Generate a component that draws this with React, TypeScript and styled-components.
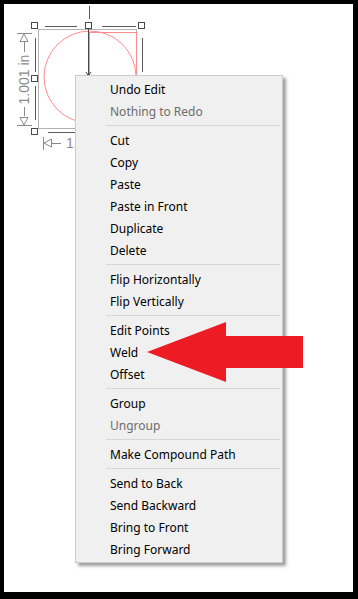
import React from 'react';
import styled, { createGlobalStyle } from 'styled-components';

type Item = { label: string; disabled?: boolean } | 'sep';

const items: Item[] = [
  { label: 'Undo Edit' },
  { label: 'Nothing to Redo', disabled: true },
  'sep',
  { label: 'Cut' },
  { label: 'Copy' },
  { label: 'Paste' },
  { label: 'Paste in Front' },
  { label: 'Duplicate' },
  { label: 'Delete' },
  'sep',
  { label: 'Flip Horizontally' },
  { label: 'Flip Vertically' },
  'sep',
  { label: 'Edit Points' },
  { label: 'Weld' },
  { label: 'Offset' },
  'sep',
  { label: 'Group' },
  { label: 'Ungroup', disabled: true },
  'sep',
  { label: 'Make Compound Path' },
  'sep',
  { label: 'Send to Back' },
  { label: 'Send Backward' },
  { label: 'Bring to Front' },
  { label: 'Bring Forward' },
];

const Selection: React.FC = () => {
  const handles = [
    [35, 26],
    [89, 26],
    [142, 26],
    [35, 79],
    [35, 132],
  ];
  return (
    <Drawing width={180} height={160} viewBox="4 4 180 160">
      <g stroke="#5a5a5a" strokeWidth={1} fill="none">
        <line x1={89.5} y1={6} x2={89.5} y2={19} />
        <line x1={45} y1={26.5} x2={77} y2={26.5} />
        <line x1={102} y1={26.5} x2={136} y2={26.5} />
        <line x1={35.5} y1={38} x2={35.5} y2={72} />
        <line x1={35.5} y1={86} x2={35.5} y2={120} />
        <line x1={142.5} y1={38} x2={142.5} y2={72} />
        <line x1={48} y1={132.5} x2={76} y2={132.5} />
      </g>
      <rect x={38.5} y={29.5} width={98} height={99} fill="none" stroke="#b4b4b4" />
      <circle cx={90} cy={77} r={46} fill="none" stroke="#ff8c8c" />
      <rect x={89.5} y={32.5} width={47} height={47} fill="none" stroke="#ff8c8c" />
      <line x1={88.5} y1={29} x2={88.5} y2={75} stroke="#4a4a4a" />
      <path d="M86 72 L88.5 76 L91 72" fill="none" stroke="#4a4a4a" />
      {handles.map(([x, y]) => (
        <rect key={`${x}-${y}`} x={x - 3.5} y={y - 3.5} width={6} height={6} fill="#fff" stroke="#4a4a4a" />
      ))}
      <g stroke="#8a8a8a" fill="none">
        <line x1={17} y1={33.5} x2={32} y2={33.5} />
        <path d="M24 34 L20 41.5 L28 41.5 Z" />
        <line x1={24.5} y1={42} x2={24.5} y2={52} />
        <line x1={24.5} y1={107} x2={24.5} y2={116} />
        <path d="M24 125 L20 117.5 L28 117.5 Z" />
        <line x1={17} y1={125.5} x2={32} y2={125.5} />
        <line x1={43.5} y1={137} x2={43.5} y2={150} />
        <path d="M44 143 L51.5 139 L51.5 147 Z" />
        <line x1={52} y1={143.5} x2={61} y2={143.5} />
      </g>
      <DimText x={29} y={79.5} transform="rotate(-90 29 79.5)" textAnchor="middle">
        1.001 in
      </DimText>
      {/* the rest of the width label sits under the context menu */}
      <DimText x={66} y={148}>
        1.
      </DimText>
    </Drawing>
  );
};

const Pointer: React.FC = () => (
  <ArrowSvg width={170} height={70} viewBox="140 318 170 70">
    <polygon
      points="147,352 226,322 226,336 303,336 303,368 226,368 226,382"
      fill="#ed1c24"
    />
  </ArrowSvg>
);

const App: React.FC = () => (
  <>
    <GlobalStyle />
    <Frame>
      <Selection />
      <Menu>
        {items.map((item, i) =>
          item === 'sep' ? (
            <Separator key={i} />
          ) : (
            <MenuItem key={i} disabled={item.disabled}>
              {item.label}
            </MenuItem>
          ),
        )}
      </Menu>
      <Pointer />
    </Frame>
  </>
);

export default App;

const GlobalStyle = createGlobalStyle`
  body {
    margin: 0;
    background: #000;
  }
`;

const Frame = styled.div`
  position: relative;
  box-sizing: border-box;
  width: 358px;
  height: 599px;
  background: #fff;
  border-style: solid;
  border-color: #000;
  border-width: 4px 5px 7px 4px;
  overflow: hidden;
`;

const Drawing = styled.svg`
  position: absolute;
  left: 0;
  top: 0;
`;

const DimText = styled.text`
  font-family: 'Liberation Sans', Arial, sans-serif;
  font-size: 14px;
  fill: #8a8a8a;
`;

const ArrowSvg = styled.svg`
  position: absolute;
  left: 136px;
  top: 314px;
`;

const Menu = styled.div`
  position: absolute;
  left: 71px;
  top: 71px;
  box-sizing: border-box;
  width: 208px;
  padding: 2px;
  background: #f0f0f0;
  border: 1px solid #cccccc;
  box-shadow: 3px 3px 3px rgba(0, 0, 0, 0.38);
  display: flex;
  flex-direction: column;
`;

const MenuItem = styled.div<{ disabled?: boolean }>`
  height: 22px;
  line-height: 24px;
  padding-left: 32px;
  font-family: 'Noto Sans', 'Open Sans', sans-serif;
  font-size: 12px;
  color: ${({ disabled }) => (disabled ? '#6d6d6d' : '#000')};
  white-space: nowrap;
`;

const Separator = styled.div`
  height: 7px;
  margin-left: 28px;
  display: flex;
  align-items: center;

  &::after {
    content: '';
    flex: 1;
    height: 1px;
    background: #d7d7d7;
  }
`;
